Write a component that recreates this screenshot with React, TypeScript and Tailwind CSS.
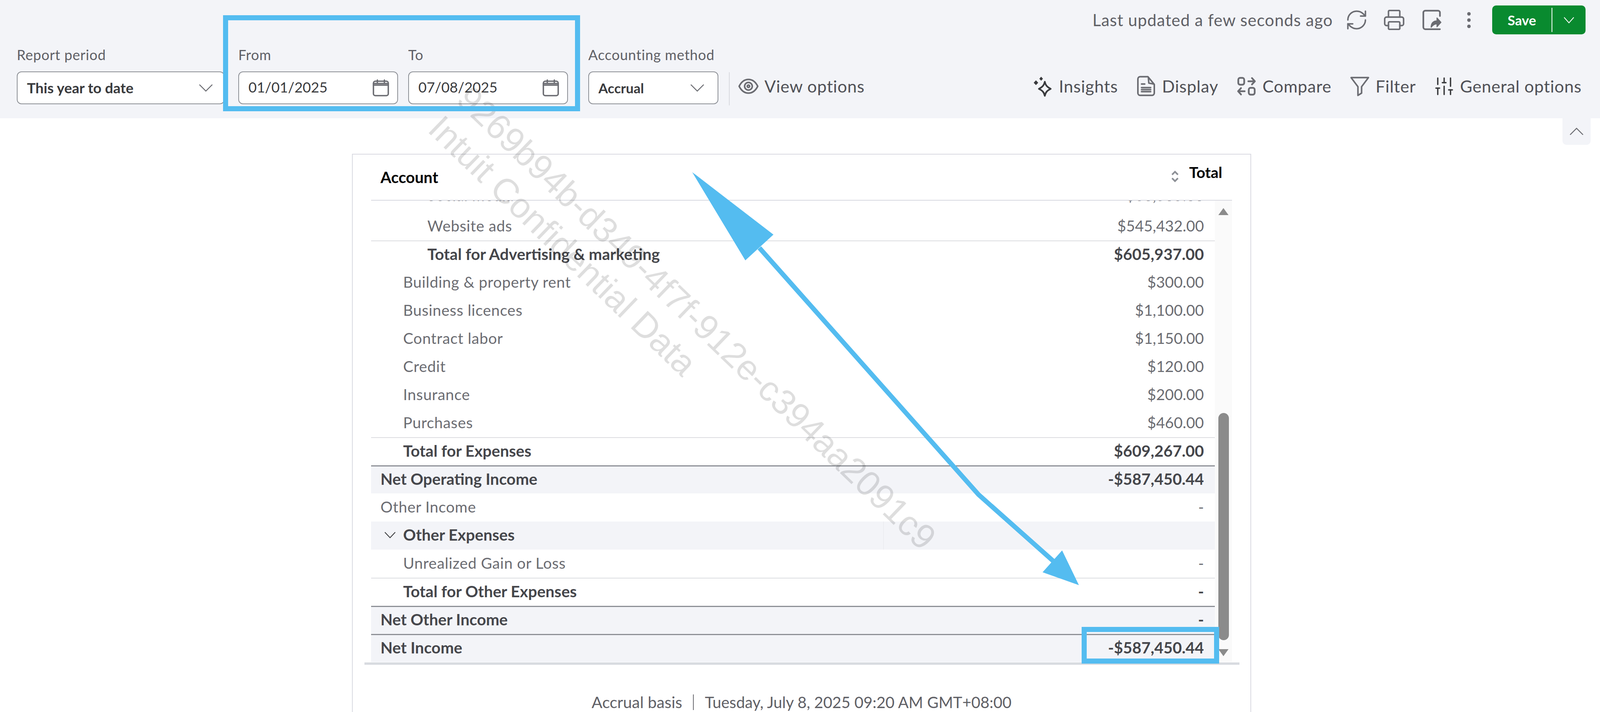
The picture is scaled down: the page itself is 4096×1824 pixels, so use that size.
import React from "react";
import { Printer, RefreshCw, SlidersVertical } from "lucide-react";

type Row = {
  label: string;
  value?: string;
  indent?: 0 | 1 | 2;
  bold?: boolean;
  band?: boolean;
  line?: "light" | "dark";
  caret?: boolean;
  split?: boolean;
  clipped?: boolean;
};

const rows: Row[] = [
  { label: "Social media", value: "$60,505.00", indent: 2, clipped: true },
  { label: "Website ads", value: "$545,432.00", indent: 2 },
  { label: "Total for Advertising & marketing", value: "$605,937.00", indent: 2, bold: true, line: "light" },
  { label: "Building & property rent", value: "$300.00", indent: 1 },
  { label: "Business licences", value: "$1,100.00", indent: 1 },
  { label: "Contract labor", value: "$1,150.00", indent: 1 },
  { label: "Credit", value: "$120.00", indent: 1 },
  { label: "Insurance", value: "$200.00", indent: 1 },
  { label: "Purchases", value: "$460.00", indent: 1 },
  { label: "Total for Expenses", value: "$609,267.00", indent: 1, bold: true, line: "light" },
  { label: "Net Operating Income", value: "-$587,450.44", bold: true, band: true, line: "dark" },
  { label: "Other Income", value: "-" },
  { label: "Other Expenses", indent: 1, bold: true, band: true, caret: true, split: true },
  { label: "Unrealized Gain or Loss", value: "-", indent: 1 },
  { label: "Total for Other Expenses", value: "-", indent: 1, bold: true, line: "light" },
  { label: "Net Other Income", value: "-", bold: true, band: true, line: "dark" },
  { label: "Net Income", value: "-$587,450.44", bold: true, band: true, line: "dark" },
];

const iconProps = {
  fill: "none",
  stroke: "#6b6c72",
  strokeWidth: 1.7,
  strokeLinecap: "round" as const,
  strokeLinejoin: "round" as const,
};

const Chev = ({ className, color = "#6b6c72", up }: { className: string; color?: string; up?: boolean }) => (
  <svg viewBox="0 0 36 22" preserveAspectRatio="none" className={className} fill="none" stroke={color} strokeWidth="2.600">
    <path d={up ? "M1.500 20 18 2 34.500 20" : "M1.500 2 18 20 34.500 2"} />
  </svg>
);

const CalendarIcon = () => (
  <svg viewBox="0 0 24 24" className="h-[48px] w-[48px]" {...iconProps} strokeWidth={1.8}>
    <rect x="2.500" y="3.500" width="19" height="18.500" rx="2.500" />
    <path d="M2.500 8.500h19M2.500 6.500h19M7.500 2v3M16.500 2v3" />
  </svg>
);

const EyeIcon = () => (
  <svg viewBox="0 0 24 24" className="h-[56px] w-[56px]" {...iconProps}>
    <path d="M1.800 12C4.300 7 8 4.500 12 4.500s7.700 2.500 10.200 7.500C19.700 17 16 19.500 12 19.500S4.300 17 1.800 12Z" />
    <circle cx="12" cy="12" r="4.200" />
    <circle cx="12" cy="12" r="1.300" />
  </svg>
);

const InsightsIcon = () => (
  <svg viewBox="0 0 24 24" className="h-[56px] w-[56px]">
    <path d="M14 7c.8 4 2.800 6 6.500 7.800C16.800 16.500 14.800 18.500 14 22.500c-.8-4-2.800-6-6.500-7.700C11.200 13 13.200 11 14 7Z" fill="none" stroke="#393a3d" strokeWidth="1.800" strokeLinejoin="round" />
    <path d="M4.300 5.500 6.800 8.100 4.300 10.700 1.800 8.100ZM10 1.500 12 3.700 10 5.900 8 3.700Z" fill="#393a3d" />
  </svg>
);

const DisplayIcon = () => (
  <svg viewBox="0 0 24 24" className="h-[56px] w-[56px]" {...iconProps}>
    <path d="M3 4A2.500 2.500 0 0 1 5.500 1.500H14l7 8.500v9.500a2.500 2.500 0 0 1-2.500 2.500h-13A2.500 2.500 0 0 1 3 19.500Z" />
    <path d="M14.500 2.500 15 8.500l5 1M7 9.500h3.500M7 13.500h10M7 15.700h10M7 17.900h10" />
  </svg>
);

const CompareIcon = () => (
  <svg viewBox="0 0 24 24" className="h-[56px] w-[56px]" {...iconProps} strokeWidth={1.900}>
    <rect x="3" y="2.800" width="6.500" height="7.500" rx="2" />
    <rect x="14.500" y="13.700" width="6.500" height="7.500" rx="2" />
    <path d="M14 6.500h7M18 3l3.200 3.500L18 10M10 17.500H3M6 14l-3.200 3.500L6 21" />
  </svg>
);

const FunnelIcon = () => (
  <svg viewBox="0 0 24 24" className="h-[56px] w-[56px]" {...iconProps}>
    <path d="M2.500 2.500h19L14 12.500v7l-4 2.500v-9.500Z" />
  </svg>
);

const ShareIcon = () => (
  <svg viewBox="0 0 24 24" className="h-[60px] w-[60px]" {...iconProps}>
    <path d="M20.500 8V4.500a2 2 0 0 0-2-2h-13a2 2 0 0 0-2 2v15a2 2 0 0 0 2 2h15" />
    <path d="M11.500 19.500c0-4.500 2.500-6.500 6-6.500v-3l4 4.500-4 4.500v-3c-2 0-4 1-6 3.500Z" fill="#6b6c72" strokeWidth={1} />
  </svg>
);

const Field = ({ label, className, children }: { label: string; className: string; children: React.ReactNode }) => (
  <div className={`flex flex-col ${className}`}>
    <div className="mb-[27px] h-[32px] text-[36px] leading-[32px] tracking-[0.8px] text-[#5f6066]">{label}</div>
    <div className="flex h-[84px] items-center justify-between rounded-[12px] border-2 border-[#8d9096] bg-white pl-[24px] text-[#393a3d]">
      {children}
    </div>
  </div>
);

const Tool = ({ icon, label }: { icon: React.ReactNode; label: string }) => (
  <div className="flex items-center gap-[13px]">
    {icon}
    <span className="text-[43px] leading-[48px] tracking-[0.8px] text-[#4f5056]">{label}</span>
  </div>
);

const ReportRow = ({ row }: { row: Row }) => {
  const pad = row.indent === 2 ? "pl-[144px]" : row.indent === 1 ? "pl-[82px]" : "pl-[24px]";
  return (
    <div
      className={`relative flex h-[72px] shrink-0 items-center justify-between pr-[28px] ${row.clipped ? "pb-[16px]" : "pb-[4px]"} ${pad} ${
        row.band ? "bg-[#f3f4f8]" : "bg-white"
      } ${row.bold ? "text-[40.5px] font-bold text-[#45464b]" : "text-[39px] text-[#6b6c72]"} ${
        row.line === "light" ? "border-t-2 border-[#dcdde1]" : row.line === "dark" ? "border-t-[3px] border-[#8d9096]" : ""
      }`}
    >
      {row.caret && <Chev className="absolute left-[34px] h-[17px] w-[29px]" color="#393a3d" />}
      <span className={row.bold ? "" : "tracking-[0.7px]"}>{row.label}</span>
      {row.value && <span>{row.value}</span>}
      {row.split && <div className="absolute bottom-0 right-[848px] top-0 w-px bg-[#e6e7ec]" />}
    </div>
  );
};

export default function App() {
  return (
    <div className="relative h-[1824px] w-[4096px] overflow-hidden bg-white font-['Lato',sans-serif]">
      {/* toolbar */}
      <div className="h-[303px] bg-[#f3f4f8]">
        <div className="flex items-center justify-end pr-[37px] pt-[14px]">
          <span className="mr-[31px] text-[42px] tracking-[1px] text-[#5f6066]">Last updated a few seconds ago</span>
          <div className="flex items-center gap-[37px]">
            <RefreshCw className="h-[60px] w-[60px] text-[#6b6c72]" strokeWidth={1.5} />
            <Printer className="h-[58px] w-[58px] text-[#6b6c72]" strokeWidth={1.6} />
            <ShareIcon />
            <div className="ml-[4px] flex h-[48px] w-[48px] flex-col items-center justify-center gap-[7px]">
              <div className="h-[9px] w-[9px] rounded-full bg-[#6b6c72]" />
              <div className="h-[9px] w-[9px] rounded-full bg-[#6b6c72]" />
              <div className="h-[9px] w-[9px] rounded-full bg-[#6b6c72]" />
            </div>
          </div>
          <div className="ml-[36px] flex h-[74px] w-[239px] items-center rounded-[10px] bg-[#098a2f] text-white">
            <div className="flex h-[62px] w-[154px] items-center justify-center border-r-2 border-white text-[35px] font-bold">Save</div>
            <div className="flex flex-1 items-center justify-center">
              <Chev className="h-[17px] w-[27px]" color="#ffffff" />
            </div>
          </div>
        </div>

        <div className="mt-[36px] flex items-end pl-[43px] pr-[47px]">
          <Field label="Report period" className="mr-[35px] w-[532px]">
            <span className="text-[37px] font-bold">This year to date</span>
            <Chev className="mr-[28px] h-[20px] w-[36px]" />
          </Field>
          <Field label="From" className="mr-[26px] w-[409px]">
            <span className="mb-[3px] text-[36.500px]">01/01/2025</span>
            <div className="mr-[18px]"><CalendarIcon /></div>
          </Field>
          <Field label="To" className="mr-[52px] w-[409px]">
            <span className="mb-[3px] text-[36.500px]">07/08/2025</span>
            <div className="mr-[18px]"><CalendarIcon /></div>
          </Field>
          <Field label="Accounting method" className="w-[333px]">
            <span className="text-[35px] font-bold">Accrual</span>
            <Chev className="mr-[34px] h-[20px] w-[36px]" />
          </Field>
          <div className="mb-[-3px] ml-[27px] mr-[20px] h-[85px] w-[2px] bg-[#d8d9df]" />
          <div className="mb-[18px]"><Tool icon={<EyeIcon />} label="View options" /></div>
          <div className="mb-[18px] ml-auto flex items-center gap-[44px]">
            <Tool icon={<InsightsIcon />} label="Insights" />
            <Tool icon={<DisplayIcon />} label="Display" />
            <Tool icon={<CompareIcon />} label="Compare" />
            <Tool icon={<FunnelIcon />} label="Filter" />
            <Tool icon={<SlidersVertical className="h-[56px] w-[56px] text-[#393a3d]" strokeWidth={1.5} />} label="General options" />
          </div>
        </div>
      </div>

      <div className="ml-[4000px] flex h-[68px] w-[72px] items-center justify-center rounded-b-[10px] bg-[#f3f4f8]">
        <Chev up className="h-[20px] w-[36px]" />
      </div>

      {/* report card */}
      <div className="ml-[901px] mt-[23px] flex h-[1500px] w-[2302px] flex-col border-x-2 border-t-2 border-[#d9dae1] pl-[47px]">
        <div className="flex h-[118px] w-[2204px] shrink-0 items-center justify-between border-b-2 border-[#d8d9e0] pl-[24px] pr-[25px] font-bold text-black">
          <span className="text-[40px]">Account</span>
          <div className="mb-[26px] flex items-center gap-[24px] text-[39px]">
            <svg viewBox="0 0 16 24" className="mt-[22px] h-[38px] w-[24px]" fill="none" stroke="#8d9096" strokeWidth="2.800">
              <path d="M3 9l5-5 5 5M3 15l5 5 5-5" />
            </svg>
            <span>Total</span>
          </div>
        </div>

        <div className="flex h-[1182px] w-[2204px] shrink-0 overflow-hidden">
          <div className="flex w-[2160px] flex-col">
            <div className="-mt-[42px] flex flex-col">
              {rows.map((r) => (
                <ReportRow key={r.label} row={r} />
              ))}
            </div>
          </div>
          <div className="flex w-[44px] flex-col items-center bg-[#fafafa] pt-[19px]">
            <div className="h-0 w-0 border-x-[13px] border-b-[18px] border-x-transparent border-b-[#8b8b8b]" />
            <div className="mt-[507px] h-[582px] w-[27px] rounded-full bg-[#8b8b8b]" />
            <div className="mt-[23px] h-0 w-0 border-x-[13px] border-t-[18px] border-x-transparent border-t-[#8b8b8b]" />
          </div>
        </div>

        <div className="-ml-[17px] mt-px h-[6px] w-[2240px] shrink-0 bg-[#d8dbe0]" />

        <div className="-ml-[47px] mt-[65px] flex items-center justify-center text-[40px] text-[#5f6066]">
          <span className="text-[40.800px]">Accrual basis</span>
          <div className="mx-[28px] h-[40px] w-[2px] bg-[#6b6c72]" />
          <span>Tuesday, July 8, 2025 09:20 AM GMT+08:00</span>
        </div>
      </div>

      {/* watermark */}
      <div className="pointer-events-none absolute left-[1222px] top-[200px] origin-top-left rotate-[44deg] whitespace-nowrap font-['Liberation_Sans',sans-serif] text-[90px] leading-[105px] text-black/[0.13]">
        <div>9269b94b-d349-4f7f-912e-c394aa2091c9</div>
        <div>Intuit Confidential Data</div>
      </div>

      {/* callouts drawn on top of the screenshot */}
      <div className="absolute left-[571px] top-[39px] h-[246px] w-[914px] border-[13px] border-[#54bcf0]" />
      <div className="absolute left-[2769px] top-[1606px] h-[94px] w-[352px] border-[13px] border-[#54bcf0]" />
      <svg className="pointer-events-none absolute left-0 top-0" width="4096" height="1824" viewBox="0 0 4096 1824">
        <path d="M1944 635 2505 1267 2696 1437" fill="none" stroke="#54bcf0" strokeWidth="12" />
        <path d="M1772 441 1980 601 1908 667Z" fill="#54bcf0" />
        <path d="M2762 1499 2719 1410 2669 1466Z" fill="#54bcf0" />
      </svg>
    </div>
  );
}
